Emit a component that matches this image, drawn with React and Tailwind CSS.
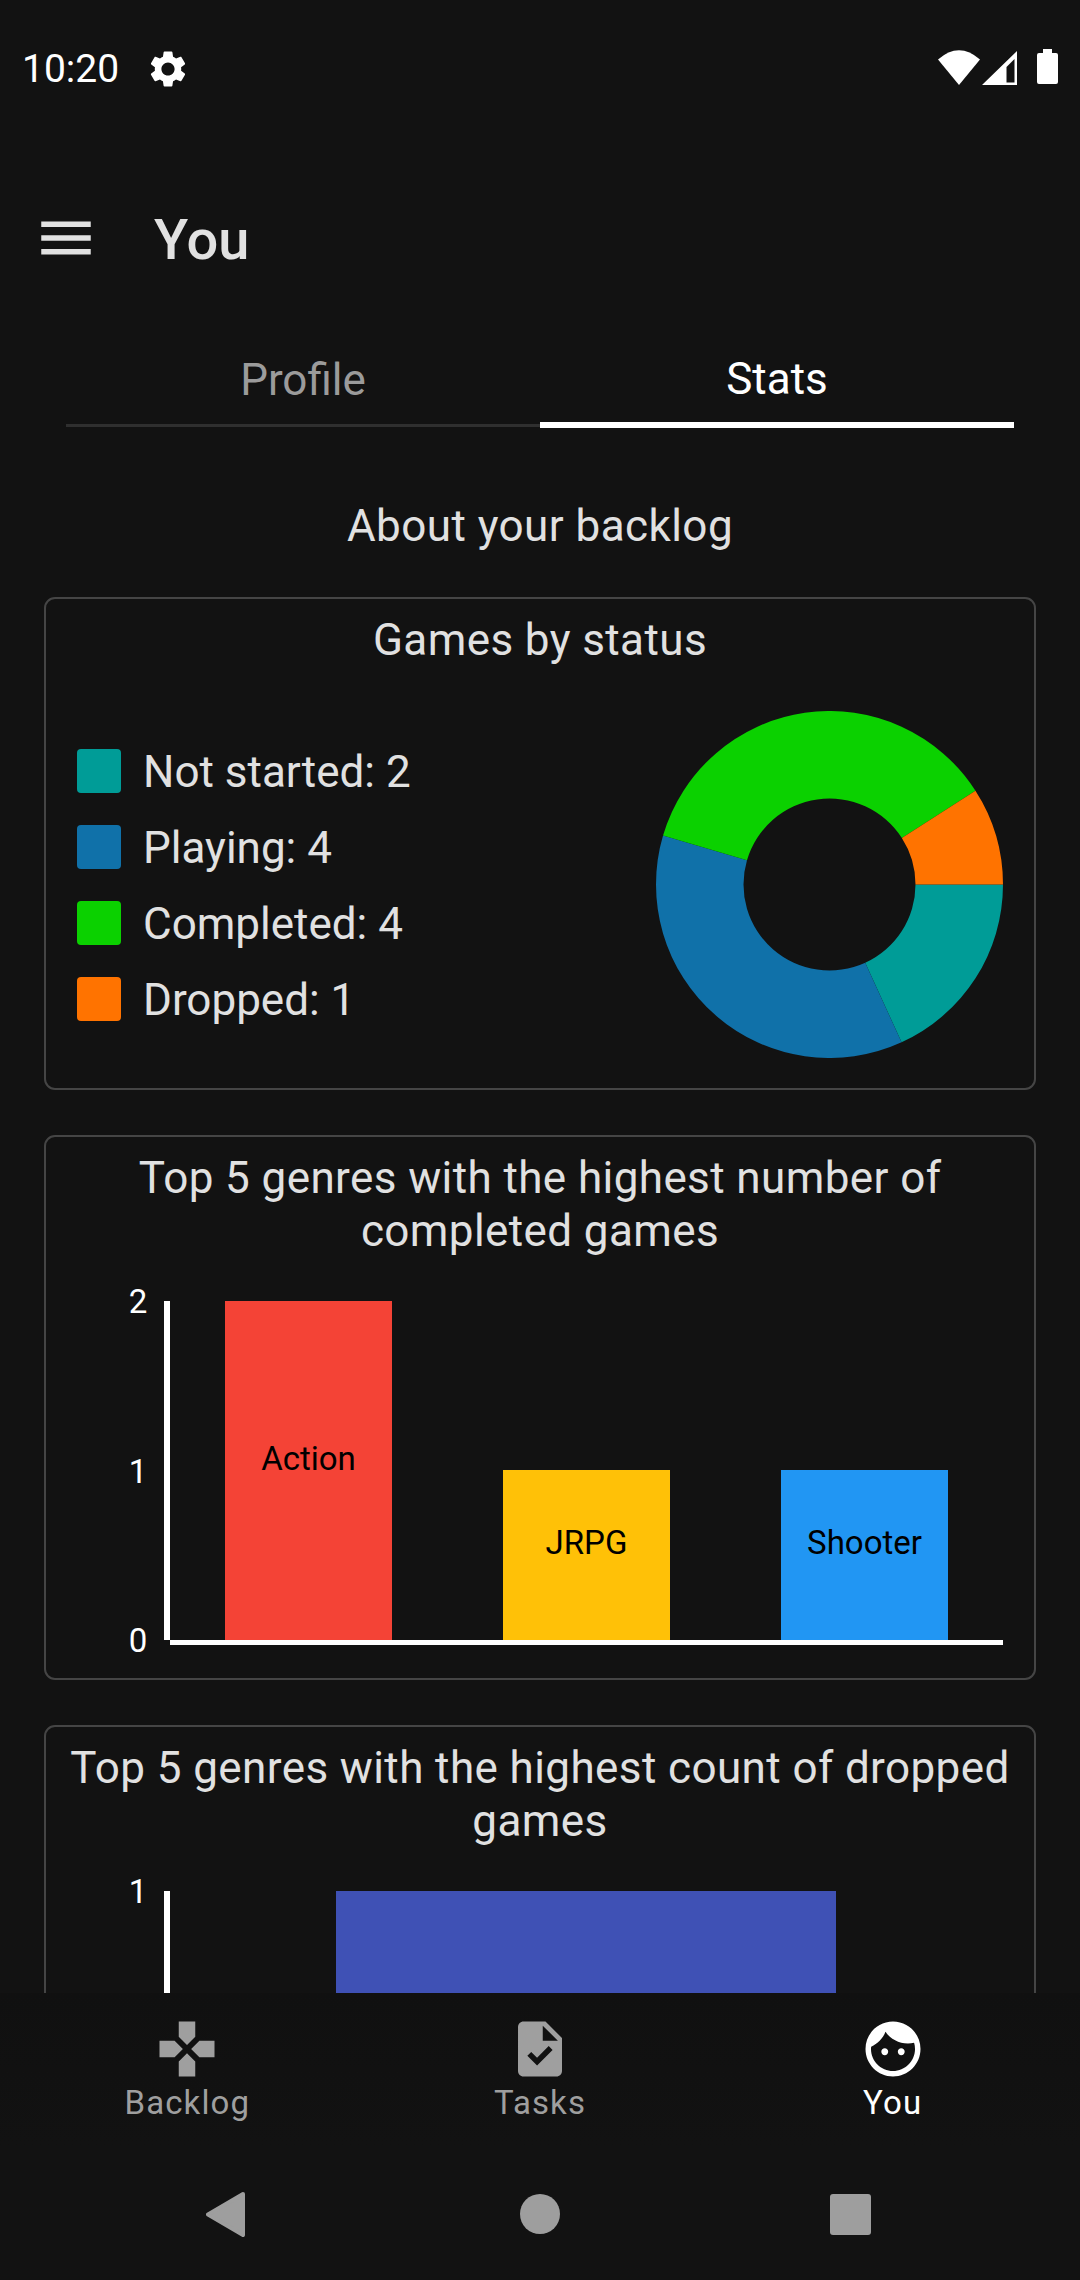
const F = "font-['Roboto',sans-serif]";

function polar(r, a) {
  return [173.5 + r * Math.cos(a), 173.5 + r * Math.sin(a)];
}

function slicePath(start, end) {
  const R = 173.5, r = 86;
  const a0 = (start / 11) * 2 * Math.PI, a1 = (end / 11) * 2 * Math.PI;
  const large = end - start > 5.5 ? 1 : 0;
  const [x0, y0] = polar(R, a0), [x1, y1] = polar(R, a1), [x2, y2] = polar(r, a1), [x3, y3] = polar(r, a0);
  return `M${x0} ${y0}A${R} ${R} 0 ${large} 1 ${x1} ${y1}L${x2} ${y2}A${r} ${r} 0 ${large} 0 ${x3} ${y3}Z`;
}

function Donut() {
  const s = [[0, 2, "#009c97"], [2, 6, "#1071a9"], [6, 10, "#0bd100"], [10, 11, "#ff7300"]];
  return (
    <svg width="347" height="347" viewBox="0 0 347 347" className="shrink-0">
      {s.map(([a, b, c]) => <path key={c} d={slicePath(a, b)} fill={c} />)}
    </svg>
  );
}

function Legend({ color, label }) {
  return (
    <div className="flex items-center h-[44px]">
      <div className="w-[44px] h-[44px] rounded-[4px] mr-[22px]" style={{ background: color }} />
      <span className="text-[44px] leading-[52px] pt-[2px] text-[#e1e1e1]">{label}</span>
    </div>
  );
}

function Card({ title, children, className }) {
  return (
    <section className={"border-2 border-[#454545] rounded-[11px] pt-[15px] " + className}>
      <h2 className="text-[44px] leading-[52.5px] tracking-[0.4px] text-[#e1e1e1] text-center font-normal px-[20px]">{title}</h2>
      {children}
    </section>
  );
}

function YAxis({ labels, height }) {
  return (
    <div className="flex flex-col justify-between w-[40px] items-center mr-[6px]" style={{ height }}>
      {labels.map((l) => (
        <span key={l} className="text-[33px] leading-[42px] h-[40px] -my-[20px] text-white">{l}</span>
      ))}
    </div>
  );
}

function Bar({ h, w = 167, color, label, left }) {
  return (
    <div className="flex items-center justify-center text-black text-[33px] leading-[40px] shrink-0 pb-[24px]" style={{ height: h, width: w, background: color, marginLeft: left }}>
      {label}
    </div>
  );
}

function NavItem({ d, label, active }) {
  const c = active ? "text-white" : "text-[#9f9f9f]";
  return (
    <div className={"flex flex-col items-center pt-[23px] " + c}>
      <svg width="66" height="66" viewBox="0 0 24 24" fill="currentColor"><path d={d} /></svg>
      <span className="text-[33px] leading-[38px] tracking-[1.1px] mt-[2px]">{label}</span>
    </div>
  );
}

export default function App() {
  return (
    <div className={"w-[1080px] h-[2280px] bg-[#121212] flex flex-col overflow-hidden " + F}>
      {/* status bar */}
      <div className="h-[161px] shrink-0 flex items-start pt-[47px] pl-[22px] pr-[22px]">
        <span className="text-[39px] leading-[44px] text-white">10:20</span>
        <svg width="44" height="44" viewBox="0 0 24 24" fill="#fff" className="ml-[27px]">
          <path d="M19.14 12.94c.04-.3.06-.61.06-.94 0-.32-.02-.64-.07-.94l2.03-1.58c.18-.14.23-.41.12-.61l-1.92-3.32c-.12-.22-.37-.29-.59-.22l-2.39.96c-.5-.38-1.03-.7-1.62-.94l-.36-2.54c-.04-.24-.24-.41-.48-.41h-3.84c-.24 0-.43.17-.47.41l-.36 2.54c-.59.24-1.13.57-1.62.94l-2.39-.96c-.22-.08-.47 0-.59.22L2.74 8.87c-.12.21-.08.47.12.61l2.03 1.58c-.05.3-.09.63-.09.94s.02.64.07.94l-2.03 1.58c-.18.14-.23.41-.12.61l1.92 3.32c.12.22.37.29.59.22l2.39-.96c.5.38 1.03.7 1.62.94l.36 2.54c.05.24.24.41.48.41h3.84c.24 0 .44-.17.47-.41l.36-2.54c.59-.24 1.13-.56 1.62-.94l2.39.96c.22.08.47 0 .59-.22l1.92-3.32c.12-.22.07-.47-.12-.61l-2.01-1.58zM12 15.6c-1.98 0-3.6-1.62-3.6-3.6s1.62-3.6 3.6-3.6 3.6 1.62 3.6 3.6-1.62 3.6-3.6 3.6z" />
        </svg>
        <div className="ml-auto flex items-start pt-[2px]">
          <svg width="42" height="35" viewBox="0 0 42 35" fill="#fff" className="mt-[1px]">
            <path d="M0 9.5Q21 -9 42 9.5L21 35Z" />
          </svg>
          <svg width="35" height="34" viewBox="0 0 35 34" className="ml-[2px] mt-[2px]">
            <path fillRule="evenodd" fill="#fff" d="M35 0V34H0ZM24.500 16V31.500H32.500V8Z" />
          </svg>
          <svg width="21" height="35" viewBox="0 0 21 35" fill="#fff" className="ml-[20px]">
            <path d="M6 0H15V4H19Q21 4 21 6V33Q21 35 19 35H2Q0 35 0 33V6Q0 4 2 4H6Z" />
          </svg>
        </div>
      </div>

      {/* app bar */}
      <div className="h-[154px] shrink-0 flex items-center pl-[33px]">
        <svg width="66" height="66" viewBox="0 0 24 24" fill="#e1e1e1"><path d="M3 18h18v-2H3v2zm0-5h18v-2H3v2zm0-7v2h18V6H3z" /></svg>
        <span className="ml-[55px] pt-[3px] text-[56px] font-medium text-[#e1e1e1] leading-[60px]">You</span>
      </div>

      {/* tabs */}
      <div className="h-[113px] shrink-0 mx-[66px] grid grid-cols-2">
        <div className="flex flex-col justify-end">
          <div className="flex-1 flex items-center justify-center text-[44px] text-[#9b9b9b] pt-[20px]">Profile</div>
          <div className="h-[3px] bg-[#2f2f2f] mb-[1px]" />
        </div>
        <div className="flex flex-col justify-end">
          <div className="flex-1 flex items-center justify-center text-[44px] text-white pt-[20px]">Stats</div>
          <div className="h-[6px] bg-white" />
        </div>
      </div>

      {/* content */}
      <div className="flex-1 min-h-0 overflow-hidden flex flex-col">
        <h1 className="text-center text-[44px] leading-[52px] tracking-[0.44px] text-[#e1e1e1] font-normal mt-[72px] mb-[45px] shrink-0">About your backlog</h1>
        <div className="mx-[44px] flex flex-col gap-[45px]">
          <Card title="Games by status" className="h-[493px]">
            <div className="flex items-start justify-between pl-[31px] pr-[31px] mt-[44px]">
              <div className="flex flex-col gap-[32px] pt-[38px]">
                <Legend color="#009c97" label="Not started: 2" />
                <Legend color="#1071a9" label="Playing: 4" />
                <Legend color="#0bd100" label="Completed: 4" />
                <Legend color="#ff7300" label="Dropped: 1" />
              </div>
              <Donut />
            </div>
          </Card>

          <Card title="Top 5 genres with the highest number of completed games" className="h-[545px]">
            <div className="flex mt-[44px] pl-[72px]">
              <YAxis labels={["2", "1", "0"]} height={339} />
              <div className="w-[6px] h-[339px] bg-white" />
              <div className="w-[833px] flex flex-col">
                <div className="h-[339px] flex items-end">
                  <Bar h={339} color="#f44336" label="Action" left={55} />
                  <Bar h={170} color="#ffc107" label="JRPG" left={111} />
                  <Bar h={170} color="#2196f3" label="Shooter" left={111} />
                </div>
                <div className="h-[5px] bg-white" />
              </div>
            </div>
          </Card>

          <Card title="Top 5 genres with the highest count of dropped games" className="h-[545px]">
            <div className="flex mt-[44px] pl-[72px]">
              <YAxis labels={["1"]} height={339} />
              <div className="w-[6px] h-[339px] bg-white" />
              <div className="w-[833px] h-[339px] flex items-start">
                <Bar h={339} w={500} color="#3f51b5" label="" left={166} />
              </div>
            </div>
          </Card>
        </div>
      </div>

      {/* bottom nav */}
      <div className="h-[155px] shrink-0 px-[11px] grid grid-cols-3 bg-linear-to-b from-[#101010] to-[#121212]">
        <NavItem label="Backlog" d="M15 7.5V2H9v5.5l3 3 3-3zM7.5 9H2v6h5.5l3-3-3-3zM9 16.5V22h6v-5.5l-3-3-3 3zM16.5 9l-3 3 3 3H22V9h-5.5z" />
        <NavItem label="Tasks" d="M14 2H6c-1.1 0-1.99.9-1.99 2L4 20c0 1.1.89 2 1.99 2H18c1.1 0 2-.9 2-2V8l-6-6zm-3.06 16L7.4 14.46l1.41-1.41 2.12 2.12 4.24-4.24 1.41 1.41L10.94 18zM13 9V3.500L18.500 9H13z" />
        <NavItem active label="You" d="M9 11.750c-.69 0-1.250.56-1.250 1.250s.56 1.250 1.250 1.250 1.250-.56 1.250-1.250-.56-1.250-1.250-1.250zm6 0c-.69 0-1.250.56-1.250 1.250s.56 1.250 1.250 1.250 1.250-.56 1.250-1.250-.56-1.250-1.250-1.250zM12 2C6.480 2 2 6.480 2 12s4.480 10 10 10 10-4.480 10-10S17.520 2 12 2zm0 18c-4.410 0-8-3.590-8-8 0-.29.02-.58.05-.86 2.360-1.050 4.230-2.980 5.210-5.370C11.070 8.330 14.050 10 17.420 10c.78 0 1.530-.09 2.250-.26.21.71.33 1.470.33 2.260 0 4.410-3.590 8-8 8z" />
      </div>

      {/* system nav */}
      <div className="h-[132px] shrink-0 flex items-start pt-[44px] pl-[206px]">
        <svg width="39" height="45" viewBox="0 0 39 45" fill="#9e9e9e">
          <path d="M37 2L2 22.500L37 43Z" stroke="#9e9e9e" strokeWidth="4" strokeLinejoin="round" />
        </svg>
        <div className="w-[40px] h-[40px] rounded-full bg-[#9e9e9e] ml-[275px] mt-[2px]" />
        <div className="w-[41px] h-[41px] rounded-[3px] bg-[#9e9e9e] ml-[270px] mt-[2px]" />
      </div>
    </div>
  );
}
